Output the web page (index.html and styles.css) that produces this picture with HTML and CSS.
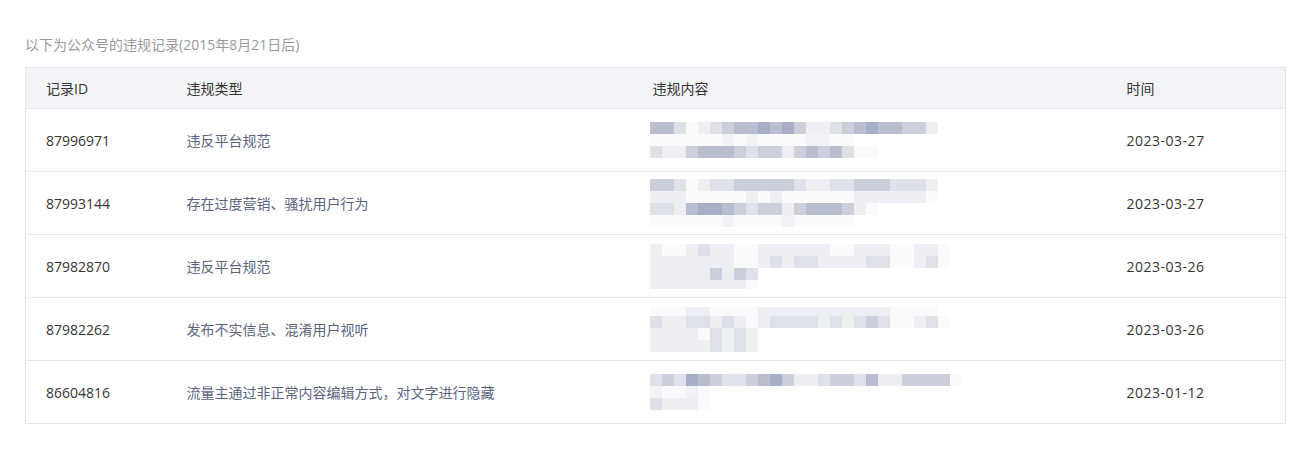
FILE: index.html
```html
<!DOCTYPE html>
<html lang="zh">
<head>
<meta charset="utf-8">
<link rel="stylesheet" href="styles.css">
</head>
<body>
<div class="page">
  <p class="note">以下为公众号的违规记录(2015年8月21日后)</p>
  <table class="records">
    <colgroup>
      <col class="c-id"><col class="c-type"><col class="c-content"><col class="c-time">
    </colgroup>
    <thead>
      <tr><th>记录ID</th><th>违规类型</th><th>违规内容</th><th>时间</th></tr>
    </thead>
    <tbody>
      <tr>
        <td class="id">87996971</td>
        <td class="type">违反平台规范</td>
        <td>
          <div class="mosaic">
            <div class="ln"><i class="d"></i><i class="d"></i><i class="b"></i><i class="o"></i><i class="a"></i><i class="b"></i><i class="c"></i><i class="d"></i><i class="d"></i><i class="e"></i><i class="d"></i><i class="e"></i><i class="c"></i><i class="a"></i><i class="a"></i><i class="b"></i><i class="c"></i><i class="d"></i><i class="e"></i><i class="d"></i><i class="d"></i><i class="c"></i><i class="c"></i><i class="a"></i></div>
            <div class="ln faint"><i class="o"></i><i class="o"></i><i class="o"></i><i class="o"></i><i class="o"></i><i class="o"></i><i class="a"></i><i class="o"></i><i class="a"></i><i class="o"></i><i class="o"></i><i class="o"></i><i class="o"></i><i class="a"></i><i class="a"></i><i class="o"></i><i class="o"></i></div>
            <div class="ln"><i class="b"></i><i class="a"></i><i class="a"></i><i class="c"></i><i class="d"></i><i class="d"></i><i class="d"></i><i class="c"></i><i class="b"></i><i class="c"></i><i class="c"></i><i class="a"></i><i class="c"></i><i class="d"></i><i class="c"></i><i class="d"></i><i class="b"></i><i class="o"></i><i class="o"></i></div>
          </div>
        </td>
        <td class="time">2023-03-27</td>
      </tr>
      <tr>
        <td class="id">87993144</td>
        <td class="type">存在过度营销、骚扰用户行为</td>
        <td>
          <div class="mosaic">
            <div class="ln"><i class="c"></i><i class="c"></i><i class="b"></i><i class="o"></i><i class="a"></i><i class="b"></i><i class="b"></i><i class="c"></i><i class="c"></i><i class="c"></i><i class="c"></i><i class="c"></i><i class="b"></i><i class="a"></i><i class="a"></i><i class="b"></i><i class="b"></i><i class="c"></i><i class="c"></i><i class="c"></i><i class="b"></i><i class="b"></i><i class="b"></i><i class="a"></i></div>
            <div class="ln"><i class="a"></i><i class="a"></i><i class="a"></i><i class="o"></i><i class="o"></i><i class="o"></i><i class="o"></i><i class="o"></i><i class="a"></i><i class="o"></i><i class="a"></i><i class="o"></i><i class="o"></i><i class="o"></i><i class="o"></i><i class="o"></i><i class="o"></i><i class="a"></i><i class="a"></i><i class="a"></i><i class="a"></i><i class="a"></i><i class="a"></i><i class="o"></i></div>
            <div class="ln"><i class="b"></i><i class="b"></i><i class="a"></i><i class="d"></i><i class="e"></i><i class="e"></i><i class="d"></i><i class="c"></i><i class="b"></i><i class="c"></i><i class="c"></i><i class="a"></i><i class="c"></i><i class="d"></i><i class="d"></i><i class="d"></i><i class="c"></i><i class="a"></i><i class="o"></i></div>
            <div class="ln faint"><i class="o"></i><i class="o"></i><i class="o"></i><i class="o"></i><i class="o"></i><i class="o"></i><i class="a"></i><i class="o"></i><i class="o"></i><i class="o"></i><i class="o"></i><i class="a"></i><i class="o"></i><i class="o"></i><i class="o"></i><i class="o"></i><i class="o"></i></div>
          </div>
        </td>
        <td class="time">2023-03-27</td>
      </tr>
      <tr>
        <td class="id">87982870</td>
        <td class="type">违反平台规范</td>
        <td>
          <div class="mosaic">
            <div class="ln"><i class="a"></i><i class="o"></i><i class="o"></i><i class="a"></i><i class="b"></i><i class="a"></i><i class="a"></i><i class="o"></i><i class="o"></i><i class="a"></i><i class="a"></i><i class="a"></i><i class="a"></i><i class="a"></i><i class="a"></i><i class="o"></i><i class="o"></i><i class="a"></i><i class="a"></i><i class="a"></i><i class="o"></i><i class="o"></i><i class="a"></i><i class="a"></i><i class="o"></i></div>
            <div class="ln"><i class="a"></i><i class="a"></i><i class="a"></i><i class="a"></i><i class="a"></i><i class="a"></i><i class="a"></i><i class="o"></i><i class="o"></i><i class="a"></i><i class="b"></i><i class="a"></i><i class="b"></i><i class="b"></i><i class="a"></i><i class="a"></i><i class="a"></i><i class="a"></i><i class="b"></i><i class="b"></i><i class="o"></i><i class="o"></i><i class="a"></i><i class="b"></i><i class="o"></i></div>
            <div class="ln"><i class="a"></i><i class="a"></i><i class="a"></i><i class="a"></i><i class="a"></i><i class="c"></i><i class="a"></i><i class="c"></i><i class="b"></i></div>
            <div class="ln half"><i class="a"></i><i class="a"></i><i class="a"></i><i class="a"></i><i class="a"></i><i class="a"></i><i class="a"></i><i class="a"></i><i class="o"></i></div>
          </div>
        </td>
        <td class="time">2023-03-26</td>
      </tr>
      <tr>
        <td class="id">87982262</td>
        <td class="type">发布不实信息、混淆用户视听</td>
        <td>
          <div class="mosaic">
            <div class="ln half"><i class="o"></i><i class="o"></i><i class="o"></i><i class="a"></i><i class="a"></i><i class="o"></i><i class="o"></i><i class="o"></i><i class="o"></i><i class="a"></i><i class="a"></i><i class="a"></i><i class="a"></i><i class="a"></i><i class="a"></i><i class="a"></i><i class="a"></i><i class="a"></i><i class="a"></i><i class="a"></i><i class="o"></i><i class="o"></i><i class="o"></i><i class="o"></i></div>
            <div class="ln"><i class="b"></i><i class="a"></i><i class="a"></i><i class="b"></i><i class="b"></i><i class="a"></i><i class="b"></i><i class="a"></i><i class="o"></i><i class="a"></i><i class="b"></i><i class="b"></i><i class="b"></i><i class="b"></i><i class="a"></i><i class="b"></i><i class="a"></i><i class="b"></i><i class="c"></i><i class="b"></i><i class="o"></i><i class="o"></i><i class="a"></i><i class="b"></i><i class="o"></i></div>
            <div class="ln"><i class="a"></i><i class="a"></i><i class="a"></i><i class="a"></i><i class="o"></i><i class="b"></i><i class="a"></i><i class="b"></i><i class="a"></i></div>
            <div class="ln"><i class="a"></i><i class="a"></i><i class="a"></i><i class="a"></i><i class="a"></i><i class="b"></i><i class="a"></i><i class="b"></i><i class="a"></i></div>
          </div>
        </td>
        <td class="time">2023-03-26</td>
      </tr>
      <tr>
        <td class="id">86604816</td>
        <td class="type">流量主通过非正常内容编辑方式，对文字进行隐藏</td>
        <td>
          <div class="mosaic">
            <div class="ln"><i class="b"></i><i class="c"></i><i class="b"></i><i class="e"></i><i class="d"></i><i class="c"></i><i class="b"></i><i class="b"></i><i class="c"></i><i class="d"></i><i class="e"></i><i class="c"></i><i class="a"></i><i class="a"></i><i class="b"></i><i class="c"></i><i class="c"></i><i class="b"></i><i class="d"></i><i class="a"></i><i class="a"></i><i class="c"></i><i class="c"></i><i class="c"></i><i class="c"></i><i class="o"></i></div>
            <div class="ln faint"><i class="a"></i><i class="o"></i><i class="o"></i><i class="a"></i><i class="o"></i></div>
            <div class="ln"><i class="b"></i><i class="a"></i><i class="a"></i><i class="a"></i><i class="o"></i></div>
          </div>
        </td>
        <td class="time">2023-01-12</td>
      </tr>
    </tbody>
  </table>
</div>
</body>
</html>
```
FILE: styles.css
```css
* { box-sizing: border-box; }
body {
  margin: 0;
  background: #fff;
  font-family: "Open Sans", "Noto Sans CJK SC", sans-serif;
  font-size: 14px;
  color: #353535;
}
.page {
  padding: 35px 31px 0 25px;
}
.note {
  margin: 0 0 12px;
  color: #9a9a9a;
  font-size: 14px;
  line-height: 20px;
}
.records {
  width: 1260px;
  border-collapse: collapse;
  border: 1px solid #e4e6eb;
  table-layout: fixed;
}
.c-id { width: 141px; }
.c-type { width: 466px; }
.c-content { width: 474px; }
.c-time { width: 179px; }
.records th {
  background: #f3f4f7;
  font-weight: normal;
  text-align: left;
  height: 41px;
  padding: 0 0 0 20px;
  color: #353535;
  border-bottom: 1px solid #e4e6eb;
}
.records td {
  height: 63px;
  padding: 0 0 0 20px;
  border-bottom: 1px solid #e4e6eb;
  vertical-align: middle;
}
.id { color: #353535; }
.type { color: #5a6480; }
.time { color: #353535; letter-spacing: 0.5px; }
.mosaic {
  display: flex;
  flex-direction: column;
  margin-left: -3px;
}
.ln { display: flex; height: 12px; }
.ln.half { height: 9px; }
.ln i { display: block; width: 12px; height: 100%; }
.ln.faint { opacity: 0.8; }
.o { background: #fafafc; }
.a { background: #eeeff4; }
.b { background: #dfe1e9; }
.c { background: #cbcedb; }
.d { background: #b9bdd0; }
.e { background: #a8aec6; }
```
